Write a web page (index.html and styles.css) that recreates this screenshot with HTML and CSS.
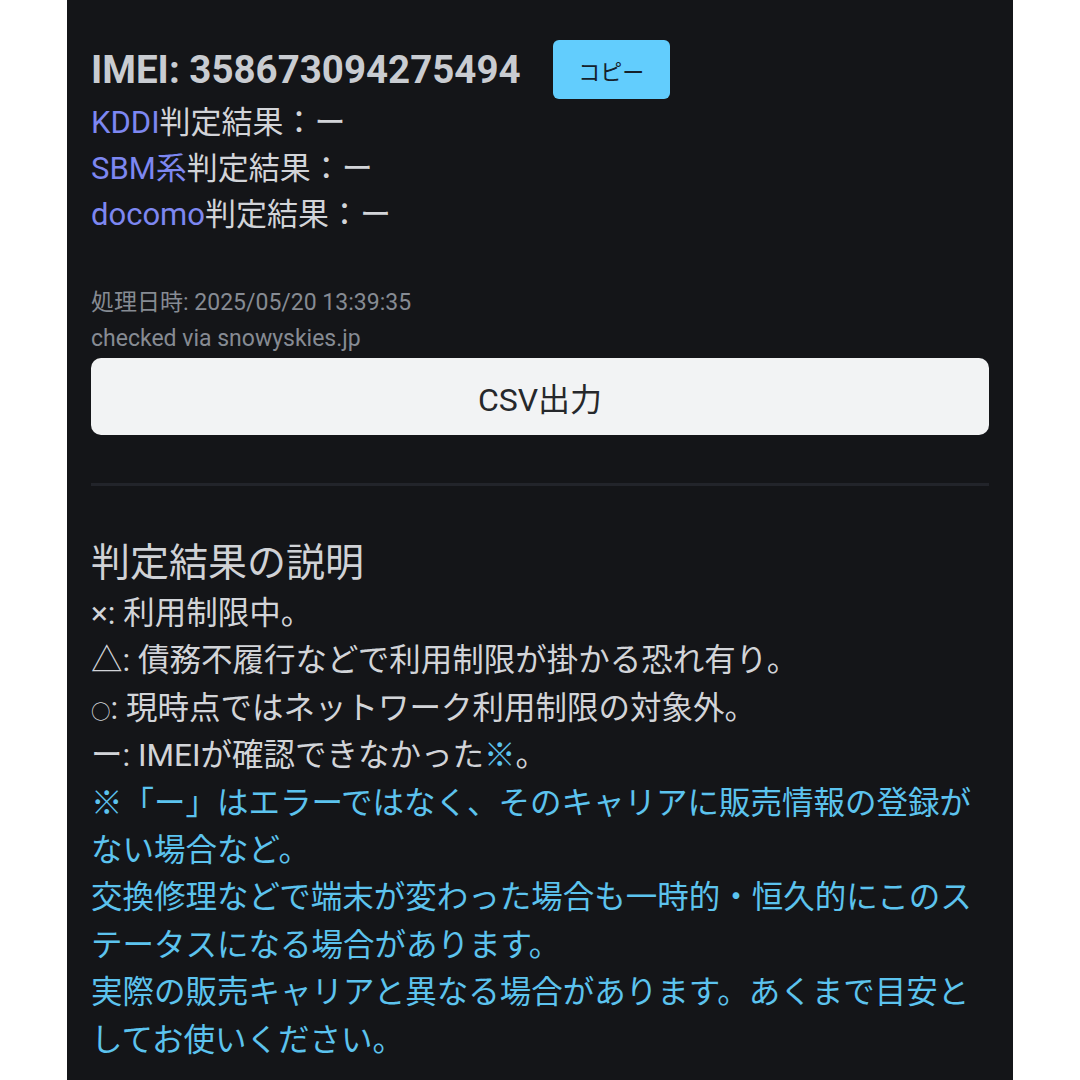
FILE: index.html
```html
<!DOCTYPE html>
<html lang="ja">
<head>
    <meta charset="UTF-8">
    <meta name="viewport" content="width=device-width, initial-scale=1.0">
    <title>IMEI判定結果</title>
    <link rel="stylesheet" href="styles.css">
</head>
<body>
    <div class="panel">
        <div class="imei-row">
            <h2 class="imei">IMEI: 358673094275494</h2>
            <button class="copy-btn">コピー</button>
        </div>
        <div class="results">
            <div><span class="carrier">KDDI</span>判定結果：ー</div>
            <div><span class="carrier">SBM系</span>判定結果：ー</div>
            <div><span class="carrier">docomo</span>判定結果：ー</div>
        </div>
        <div class="meta">
            <div>処理日時: 2025/05/20 13:39:35</div>
            <div>checked via snowyskies.jp</div>
        </div>
        <button class="csv-btn">CSV出力</button>

        <hr class="divider">

        <h3 class="legend-title">判定結果の説明</h3>
        <div class="legend">
            <div>×: 利用制限中。</div>
            <div>△: 債務不履行などで利用制限が掛かる恐れ有り。</div>
            <div><span class="mark">○</span>: 現時点ではネットワーク利用制限の対象外。</div>
            <div>ー: IMEIが確認できなかった<span class="note">※</span>。</div>
            <div class="note">※「ー」はエラーではなく、そのキャリアに販売情報の登録がない場合など。</div>
            <div class="note">交換修理などで端末が変わった場合も一時的・恒久的にこのステータスになる場合があります。</div>
            <div class="note">実際の販売キャリアと異なる場合があります。あくまで目安としてお使いください。</div>
        </div>
    </div>
</body>
</html>
```

FILE: styles.css
```css
*{
    margin: 0;
    padding: 0;
    box-sizing: border-box;
}

body{
    background-color: #ffffff;
    font-family: Roboto, "Noto Sans CJK JP", sans-serif;
}

.panel{
    width: 946px;
    min-height: 1080px;
    margin-left: 67px;
    padding: 40px 24px 0 24px;
    background-color: #141518;
    color: #d2d4d8;
}

.imei-row{
    display: flex;
    align-items: center;
    gap: 32px;
}

.imei{
    font-size: 38.5px;
    font-weight: bold;
    color: #c9ccd1;
}

.copy-btn{
    width: 117px;
    height: 59px;
    border: none;
    border-radius: 6px;
    background-color: #62cdfd;
    color: #15212b;
    font-family: Roboto, "Noto Sans CJK JP", sans-serif;
    font-size: 22px;
}

.results{
    margin-top: 1px;
    font-size: 31px;
    line-height: 46px;
}

.carrier{
    color: #7d87f1;
}

.meta{
    margin-top: 47px;
    font-size: 23px;
    line-height: 36px;
    color: #868b93;
}

.csv-btn{
    display: block;
    width: 100%;
    height: 77px;
    margin-top: 1px;
    border: none;
    border-radius: 10px;
    background-color: #f2f3f4;
    color: #26282b;
    font-family: Roboto, "Noto Sans CJK JP", sans-serif;
    font-size: 32px;
}

.divider{
    margin-top: 48px;
    height: 3px;
    border: none;
    background-color: #22242a;
}

.legend-title{
    margin-top: 51px;
    font-size: 39px;
    font-weight: normal;
    line-height: 52px;
    color: #d0d2d6;
}

.legend{
    margin-top: 1px;
    font-size: 31.5px;
    line-height: 47.4px;
}

.mark{
    font-size: 0.62em;
    line-height: 1;
}

.note{
    color: #5cc3ee;
}
```
